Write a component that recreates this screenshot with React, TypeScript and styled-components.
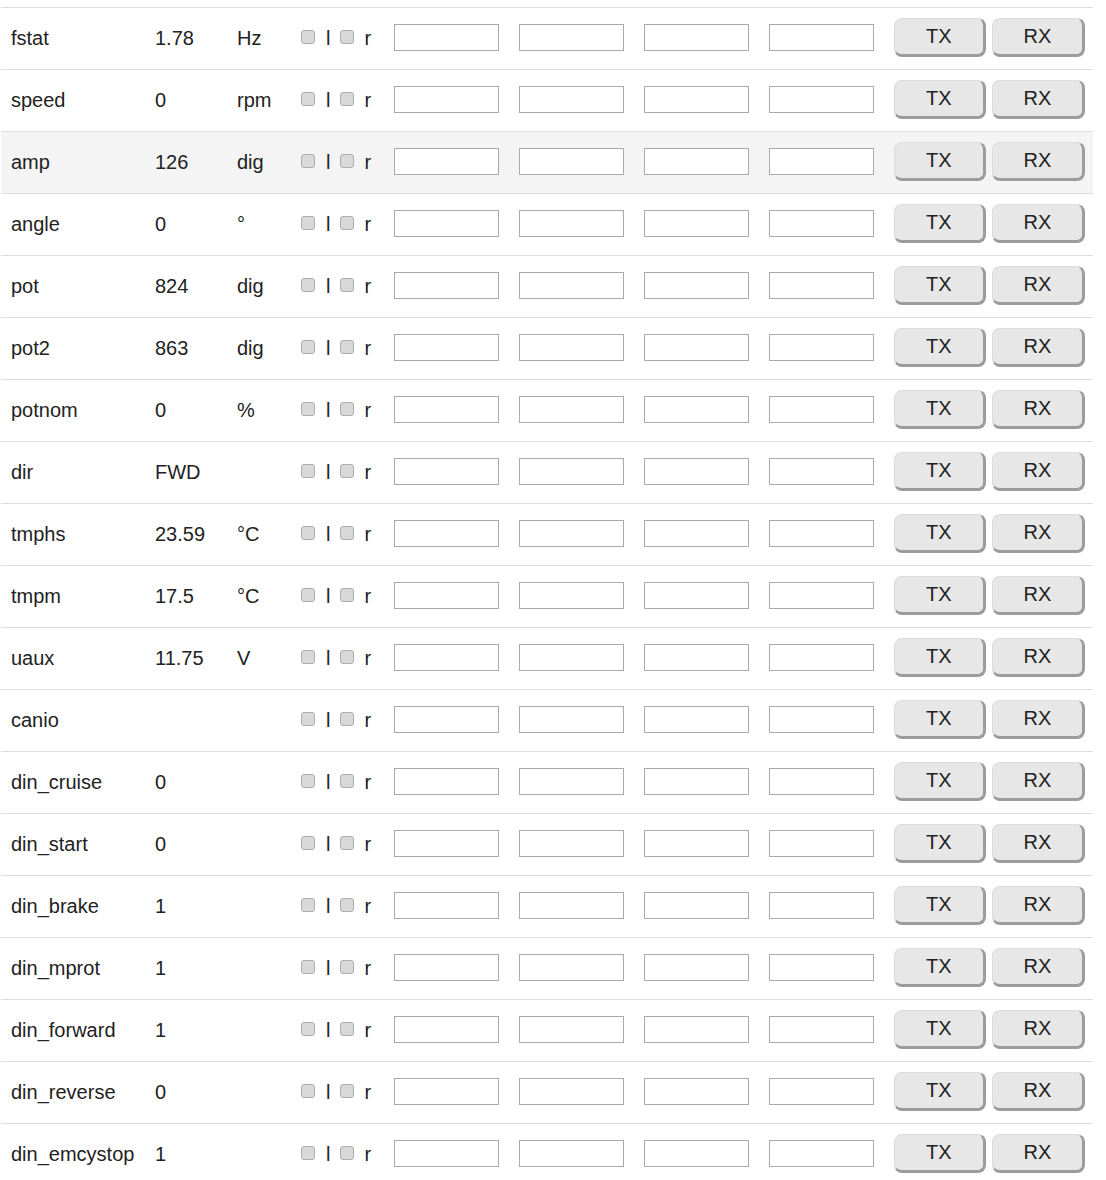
import React from "react";
import styled, { createGlobalStyle } from "styled-components";

const Global = createGlobalStyle`
  html, body { margin: 0; padding: 0; background: #fff; }
  body { font-family: "Liberation Sans", Arial, sans-serif; color: #222; }
`;

const Page = styled.div`
  padding-top: 7px;
  margin-left: 1px;
  width: 1092px;
`;

const Row = styled.div<{ $hover?: boolean }>`
  display: grid;
  grid-template-columns: 144px 82px 64px 93px repeat(4, 125px) auto;
  align-items: center;
  height: 61px;
  padding-left: 10px;
  border-top: 1px solid #dedede;
  background: ${(p) => (p.$hover ? "#f4f4f4" : "#fff")};
  font-size: 20px;
`;

const Cell = styled.div`
  white-space: nowrap;
`;

const Flags = styled.div`
  display: flex;
  align-items: center;
`;

const Check = styled.input.attrs({ type: "checkbox" })`
  appearance: none;
  -webkit-appearance: none;
  box-sizing: border-box;
  flex: 0 0 14px;
  width: 14px;
  height: 14px;
  margin: 0 0 4px 0;
  border: 1px solid #adadad;
  border-radius: 3px;
  background: #d9d9d9;
`;

const FlagLabel = styled.span<{ $gap: number }>`
  margin-left: ${(p) => p.$gap}px;
  margin-right: 10px;
  line-height: 23px;
`;

const Field = styled.input.attrs({ type: "text" })`
  box-sizing: border-box;
  width: 105px;
  height: 27px;
  margin: 0 0 2px 0;
  border: 1px solid #aaa;
  background: #fff;
  padding: 0 4px;
  font: inherit;
  font-size: 16px;
`;

const Buttons = styled.div`
  display: flex;
  gap: 6px;
`;

const Btn = styled.button`
  box-sizing: border-box;
  height: 39px;
  padding: 0 31px 0;
  margin-bottom: 2px;
  background: #e7e7e7;
  border: 1px solid #dcdcdc;
  border-right: 3px solid #9c9c9c;
  border-bottom: 3px solid #9c9c9c;
  border-radius: 8px;
  font-family: "Liberation Sans", Arial, sans-serif;
  font-size: 20px;
  color: #222;
`;

type Item = { name: string; value: string; unit: string; hover?: boolean };

const items: Item[] = [
  { name: "fstat", value: "1.78", unit: "Hz" },
  { name: "speed", value: "0", unit: "rpm" },
  { name: "amp", value: "126", unit: "dig", hover: true },
  { name: "angle", value: "0", unit: "°" },
  { name: "pot", value: "824", unit: "dig" },
  { name: "pot2", value: "863", unit: "dig" },
  { name: "potnom", value: "0", unit: "%" },
  { name: "dir", value: "FWD", unit: "" },
  { name: "tmphs", value: "23.59", unit: "°C" },
  { name: "tmpm", value: "17.5", unit: "°C" },
  { name: "uaux", value: "11.75", unit: "V" },
  { name: "canio", value: "", unit: "" },
  { name: "din_cruise", value: "0", unit: "" },
  { name: "din_start", value: "0", unit: "" },
  { name: "din_brake", value: "1", unit: "" },
  { name: "din_mprot", value: "1", unit: "" },
  { name: "din_forward", value: "1", unit: "" },
  { name: "din_reverse", value: "0", unit: "" },
  { name: "din_emcystop", value: "1", unit: "" },
];

export default function App() {
  return (
    <>
      <Global />
      <Page>
        {items.map((it) => (
          <Row key={it.name} $hover={it.hover}>
            <Cell>{it.name}</Cell>
            <Cell>{it.value}</Cell>
            <Cell>{it.unit}</Cell>
            <Flags>
              <Check />
              <FlagLabel $gap={11}>l</FlagLabel>
              <Check />
              <FlagLabel $gap={10}>r</FlagLabel>
            </Flags>
            <Field />
            <Field />
            <Field />
            <Field />
            <Buttons>
              <Btn>TX</Btn>
              <Btn>RX</Btn>
            </Buttons>
          </Row>
        ))}
      </Page>
    </>
  );
}
